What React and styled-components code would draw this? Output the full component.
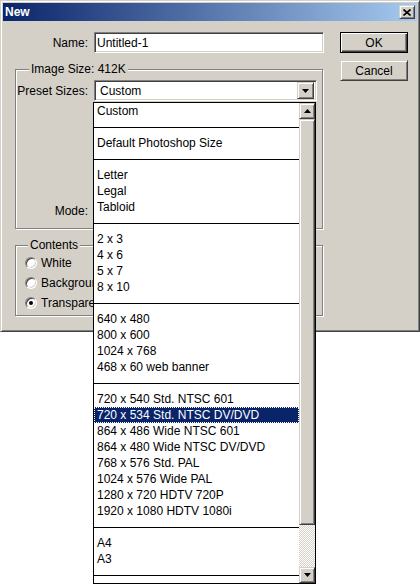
import React from 'react';
import styled, { createGlobalStyle, css } from 'styled-components';

const Global = createGlobalStyle`
  html, body { margin: 0; padding: 0; background: #fff; }
  body {
    font-family: "Liberation Sans", Arial, sans-serif;
    font-size: 12px;
    color: #000;
  }
  #root { width: 420px; height: 584px; overflow: hidden; }
`;

const raised = css`
  background: #d4d0c8;
  border: 1px solid;
  border-color: #d4d0c8 #404040 #404040 #d4d0c8;
  box-shadow: inset 1px 1px 0 #fff, inset -1px -1px 0 #808080;
  box-sizing: border-box;
`;

const sunken = css`
  background: #fff;
  border: 1px solid;
  border-color: #808080 #fff #fff #808080;
  box-shadow: inset 1px 1px 0 #404040, inset -1px -1px 0 #d4d0c8;
  box-sizing: border-box;
`;

const Window = styled.div`
  width: 420px;
  height: 332px;
  box-sizing: border-box;
  background: #d4d0c8;
  border: 1px solid;
  border-color: #d4d0c8 #404040 #404040 #d4d0c8;
  box-shadow: inset 1px 1px 0 #fff, inset -1px -1px 0 #808080;
  padding: 2px;
  display: flex;
  flex-direction: column;
`;

const TitleBar = styled.div`
  height: 18px;
  flex: none;
  background: linear-gradient(to right, #0a246a, #a6caf0);
  display: flex;
  align-items: center;
  justify-content: space-between;
  padding: 0 2px;
`;

const TitleText = styled.span`
  color: #fff;
  font-weight: bold;
  font-size: 12px;
  line-height: 14px;
`;

const CloseButton = styled.div`
  ${raised};
  width: 16px;
  height: 14px;
  display: flex;
  align-items: center;
  justify-content: center;
`;

const Body = styled.div`
  display: flex;
  gap: 16px;
  padding: 11px 12px 0 12px;
`;

const LeftColumn = styled.div`
  width: 309px;
  display: flex;
  flex-direction: column;
`;

const RightColumn = styled.div`
  width: 68px;
  display: flex;
  flex-direction: column;
  gap: 7px;
`;

const Row = styled.div`
  display: flex;
  align-items: center;
  height: 21px;
  margin-top: ${(p) => p.$mt || 0}px;
`;

const Label = styled.label`
  width: ${(p) => p.$w}px;
  margin-right: 6px;
  text-align: right;
  line-height: 14px;
  flex: none;
`;

const TextInput = styled.div`
  ${sunken};
  width: ${(p) => p.$w}px;
  height: 21px;
  padding: 3px 2px;
  line-height: 14px;
`;

const SelectWrap = styled.div`
  position: relative;
  width: ${(p) => p.$w}px;
  height: 21px;
  flex: none;
`;

const SelectBox = styled.div`
  ${sunken};
  width: 100%;
  height: 21px;
  display: flex;
  align-items: center;
  justify-content: space-between;
  padding: 2px;
`;

const SelectValue = styled.span`
  padding-left: 3px;
  line-height: 14px;
`;

const ArrowButton = styled.div`
  ${raised};
  width: 17px;
  height: 17px;
  display: flex;
  align-items: center;
  justify-content: center;
  flex: none;
`;

const Group = styled.fieldset`
  margin: 10px 0 0 0;
  width: 308px;
  min-width: 0;
  box-sizing: border-box;
  border: 1px solid #808080;
  box-shadow: inset 1px 1px 0 #fff, 1px 1px 0 #fff;
  padding: ${(p) => p.$pad};
`;

const Legend = styled.legend`
  margin-left: ${(p) => p.$ml}px;
  padding: 0 2px;
  line-height: 13px;
  font-size: 12px;
  background: #d4d0c8;
`;

const RadioRow = styled.div`
  display: flex;
  align-items: center;
  height: 20px;
  padding-left: 9px;
  gap: 4px;
`;

const RadioCircle = styled.span`
  width: 12px;
  height: 12px;
  box-sizing: border-box;
  border-radius: 50%;
  background: #fff;
  border: 1px solid;
  border-color: #808080 #fff #fff #808080;
  box-shadow: inset 1px 1px 0 #404040, inset -1px -1px 0 #d4d0c8;
  display: flex;
  align-items: center;
  justify-content: center;
  flex: none;
  &::after {
    content: "";
    width: 4px;
    height: 4px;
    border-radius: 50%;
    background: ${(p) => (p.$checked ? '#000' : 'transparent')};
  }
`;

const RadioText = styled.span`
  line-height: 14px;
  white-space: nowrap;
`;

const Button = styled.div`
  ${raised};
  width: 68px;
  height: 21px;
  display: flex;
  align-items: center;
  justify-content: center;
  line-height: 14px;
  ${(p) =>
    p.$default &&
    css`
      border: 1px solid #000;
      box-shadow: inset 1px 1px 0 #fff, inset -1px -1px 0 #404040,
        inset -2px -2px 0 #808080;
    `}
`;

const DropList = styled.div`
  position: absolute;
  z-index: 10;
  top: 22px;
  left: -1px;
  width: 223px;
  height: 482px;
  box-sizing: border-box;
  border: 1px solid #000;
  background: #fff;
  display: flex;
`;

const Items = styled.div`
  flex: 1;
  min-width: 0;
  display: flex;
  flex-direction: column;
`;

const Item = styled.div`
  height: 16px;
  line-height: 16px;
  padding-left: 3px;
  white-space: nowrap;
  overflow: hidden;
  ${(p) =>
    p.$selected &&
    css`
      background: #0a246a;
      color: #fff;
      outline: 1px dotted #fff;
      outline-offset: -1px;
    `}
`;

const Separator = styled.div`
  height: 16px;
  flex: none;
  background: linear-gradient(#000, #000) 0 8px / 100% 1px no-repeat;
`;

const ScrollBar = styled.div`
  width: 16px;
  flex: none;
  display: flex;
  flex-direction: column;
`;

const ScrollButton = styled.div`
  ${raised};
  width: 16px;
  height: 16px;
  flex: none;
  display: flex;
  align-items: center;
  justify-content: center;
`;

const Thumb = styled.div`
  ${raised};
  height: ${(p) => p.$h}px;
  flex: none;
`;

const Track = styled.div`
  flex: 1;
  background-color: #fff;
  background-image: repeating-conic-gradient(#d4d0c8 0 25%, #fff 0 50%);
  background-size: 2px 2px;
`;

const Triangle = ({ up }) => (
  <svg width="7" height="4" viewBox="0 0 7 4">
    {up ? <polygon points="3.5,0 7,4 0,4" fill="#000" /> : <polygon points="0,0 7,0 3.5,4" fill="#000" />}
  </svg>
);

const CloseIcon = () => (
  <svg width="8" height="7" viewBox="0 0 8 7">
    <path d="M0.5 0.5 L7.5 6.5 M7.5 0.5 L0.5 6.5" stroke="#000" strokeWidth="1.6" fill="none" />
  </svg>
);

const groups = [
  ['Custom'],
  ['Default Photoshop Size'],
  ['Letter', 'Legal', 'Tabloid'],
  ['2 x 3', '4 x 6', '5 x 7', '8 x 10'],
  ['640 x 480', '800 x 600', '1024 x 768', '468 x 60 web banner'],
  [
    '720 x 540 Std. NTSC 601',
    '720 x 534 Std. NTSC DV/DVD',
    '864 x 486 Wide NTSC 601',
    '864 x 480 Wide NTSC DV/DVD',
    '768 x 576 Std. PAL',
    '1024 x 576 Wide PAL',
    '1280 x 720 HDTV 720P',
    '1920 x 1080 HDTV 1080i',
  ],
  ['A4', 'A3'],
];

const SELECTED = '720 x 534 Std. NTSC DV/DVD';

export default function App() {
  return (
    <>
      <Global />
      <Window>
        <TitleBar>
          <TitleText>New</TitleText>
          <CloseButton>
            <CloseIcon />
          </CloseButton>
        </TitleBar>
        <Body>
          <LeftColumn>
            <Row>
              <Label $w={73}>Name:</Label>
              <TextInput $w={231}>Untitled-1</TextInput>
            </Row>
            <Group $pad="4px 0 7px 0">
              <Legend $ml={13}>Image Size: 412K</Legend>
              <Row>
                <Label $w={72}>Preset Sizes:</Label>
                <SelectWrap $w={223}>
                  <SelectBox>
                    <SelectValue>Custom</SelectValue>
                    <ArrowButton>
                      <Triangle />
                    </ArrowButton>
                  </SelectBox>
                  <DropList>
                    <Items>
                      {groups.map((g, gi) => (
                        <React.Fragment key={gi}>
                          {g.map((name) => (
                            <Item key={name} $selected={name === SELECTED}>
                              {name}
                            </Item>
                          ))}
                          <Separator />
                        </React.Fragment>
                      ))}
                    </Items>
                    <ScrollBar>
                      <ScrollButton>
                        <Triangle up />
                      </ScrollButton>
                      <Thumb $h={406} />
                      <Track />
                      <ScrollButton>
                        <Triangle />
                      </ScrollButton>
                    </ScrollBar>
                  </DropList>
                </SelectWrap>
              </Row>
              <Row $mt={99}>
                <Label $w={72}>Mode:</Label>
              </Row>
            </Group>
            <Group $pad="1px 0 2px 0">
              <Legend $ml={12}>Contents</Legend>
              <RadioRow>
                <RadioCircle />
                <RadioText>White</RadioText>
              </RadioRow>
              <RadioRow>
                <RadioCircle />
                <RadioText>Background Color</RadioText>
              </RadioRow>
              <RadioRow>
                <RadioCircle $checked />
                <RadioText>Transparent</RadioText>
              </RadioRow>
            </Group>
          </LeftColumn>
          <RightColumn>
            <Button $default>OK</Button>
            <Button>Cancel</Button>
          </RightColumn>
        </Body>
      </Window>
    </>
  );
}
